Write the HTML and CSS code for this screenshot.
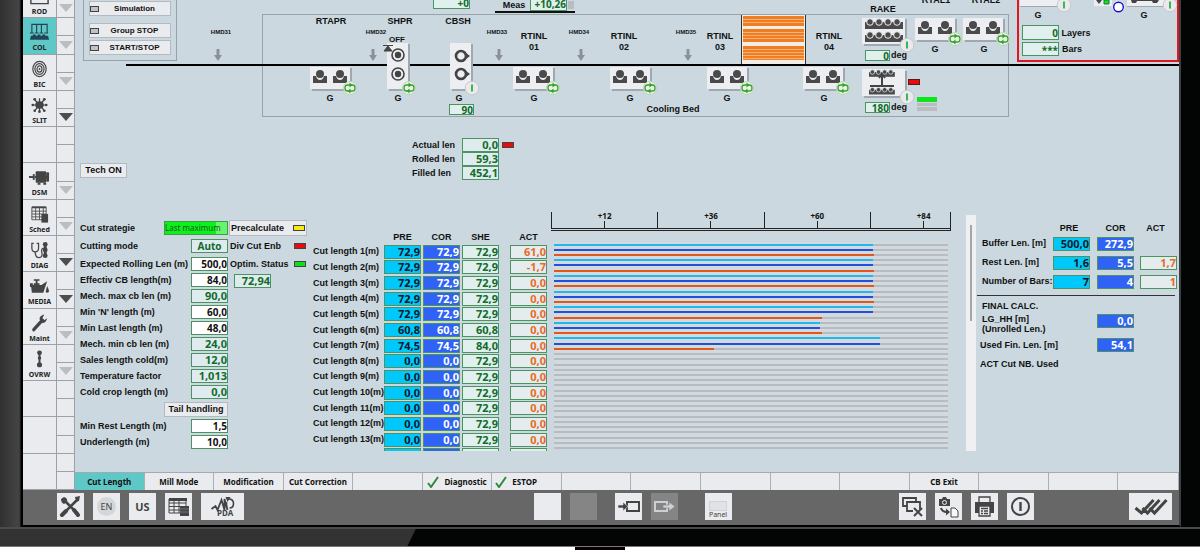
FILE: index.html
```html
<!DOCTYPE html>
<html lang="en">
<head>
<meta charset="utf-8">
<title>Cooling bed - Cut Length</title>
<link rel="stylesheet" href="styles.css">
</head>
<body>
<div class="monitor">
  <div class="screen">
    <nav class="areas">
      <a class="area" href="#"><svg class="area-icon" viewBox="0 0 22 18"><path d="M2 2h18v15H2z" fill="none" stroke="#444" stroke-width="1.5"/></svg>ROD</a><span class="more light"></span>
      <a class="area active" href="#"><svg class="area-icon" viewBox="0 0 22 18"><path d="M3 10V1h16v9M8 1v9M13 1v9M1 10h4M6 10h4M11 10h4M16 10h4" fill="none" stroke="#245" stroke-width="1.2"/><path d="M2 13h18l1 4H1z" fill="#245"/><path d="M4 12.5h3M9 12.5h3M14 12.5h3" stroke="#245" stroke-width="2"/></svg>COL</a><span class="more light"></span>
      <a class="area" href="#"><svg class="area-icon" viewBox="0 0 22 18"><g fill="none" stroke="#444" stroke-width="1.2"><ellipse cx="11" cy="9" rx="7" ry="8"/><ellipse cx="11" cy="9" rx="4.8" ry="5.6"/><ellipse cx="11" cy="9" rx="2.6" ry="3.2"/></g><circle cx="11" cy="9" r="1" fill="#444"/></svg>BIC</a><span class="more light"></span>
      <a class="area" href="#"><svg class="area-icon" viewBox="0 0 22 18"><ellipse cx="11" cy="9" rx="4.5" ry="3.8" fill="#444"/><path d="M11 9V2M11 9L5 2.500M11 9l6-6.500M3 9h16M11 9l-5 6M11 9l5 6M11 9v7" stroke="#444" stroke-width="1.300"/><g fill="#444"><circle cx="6" cy="3" r="1.400"/><circle cx="16" cy="3" r="1.400"/><circle cx="4" cy="9" r="1.400"/><circle cx="18" cy="9" r="1.400"/><circle cx="6" cy="15" r="1.400"/><circle cx="16" cy="15" r="1.400"/><circle cx="11" cy="16" r="1.400"/></g></svg>SLIT</a><span class="more dark"></span>
      <span class="area"></span><span class="more"></span>
      <a class="area" href="#"><svg class="area-icon" viewBox="0 0 22 18"><path d="M0 9h5" stroke="#444" stroke-width="2"/><rect x="4" y="6" width="2" height="6" fill="#444"/><rect x="7" y="3" width="11" height="12" rx="1" fill="#444"/><rect x="18" y="4" width="3" height="10" rx="1" fill="#444"/><path d="M6 9h13M9 16h3M15 16h3" stroke="#444" stroke-width="2"/></svg>DSM</a><span class="more light"></span>
      <a class="area" href="#"><svg class="area-icon" viewBox="0 0 22 18"><path d="M3 2h15v13H3zM3 6h15M3 9h15M3 12h15M7 2v13M11 2v13M15 2v13" fill="none" stroke="#555"/><path d="M3 2h15" stroke="#444" stroke-width="2"/><rect x="13" y="9" width="7" height="9" fill="#444"/></svg>Sched</a><span class="more light"></span>
      <a class="area" href="#"><svg class="area-icon" viewBox="0 0 22 18"><path d="M5 2H3v5q0 4 3.500 4T10 7V2H8M6.500 11q0 6 4 6t3-5 2-5" fill="none" stroke="#444" stroke-width="1.300"/><path d="M17 2v14" stroke="#444" stroke-width="3"/><g fill="#444"><circle cx="17" cy="3" r="2.500"/><circle cx="17" cy="9" r="2.500"/><circle cx="17" cy="15" r="2.500"/></g></svg>DIAG</a><span class="more dark"></span>
      <a class="area" href="#"><svg class="area-icon" viewBox="0 0 22 18"><path d="M2 8h11l6-4-4 12H3zM1 6h3v4H1zM5 6h6v2H5zM7 3h2v4H7zM5 2h6v1.500H5z" fill="#444"/><path d="M19 9q2 4 2 5.500t-2 1.500-1.500-1.500T19 9z" fill="#444"/></svg>MEDIA</a><span class="more dark"></span>
      <a class="area" href="#"><svg class="area-icon" viewBox="0 0 22 18"><path d="M5 16L14 6" stroke="#444" stroke-width="3.400" stroke-linecap="round"/><path d="M16 0q-5 1-5 5l3 4q4 0 5-5l-3 2-2-2z" fill="#444"/></svg>Maint</a><span class="more light"></span>
      <a class="area" href="#"><svg class="area-icon" viewBox="0 0 22 18"><path d="M11 3v12" stroke="#444" stroke-width="2"/><g fill="#444"><circle cx="11" cy="2.500" r="2.500"/><circle cx="11" cy="8" r="1.800"/><circle cx="11" cy="15" r="2.700"/></g></svg>OVRW</a><span class="more light"></span>
      <span class="area"></span><span class="more"></span>
      <span class="area"></span><span class="more"></span>
      <span class="area"></span><span class="more"></span>
    </nav>

    <main class="work">
      <section class="mimic">
        <svg class="mimic-art" viewBox="75 0 1104 210" preserveAspectRatio="xMinYMin meet">
          <defs>
            <g id="roll"><path d="M0 2h3q1 4 4 4t4-4h3v7H0z" fill="#4a4a4a"/><circle cx="7" cy="0" r="4" fill="#4a4a4a"/></g>
            <g id="loop"><circle r="6.500" fill="#e4f5dc" stroke="#b9d8b4"/><path d="M-1 3h-1.500q-2.500 0-2.500-3t2.500-3h3M1-3h1.500q2.500 0 2.500 3T2.500 3H0" fill="none" stroke="#3c9a3c" stroke-width="1.300"/><path d="M-.5-5.500l3 2.500-3 2.500zM.5 5.500l-3-2.500 3-2.500z" fill="#3c9a3c"/></g>
            <g id="run"><circle r="6.800" fill="#ebe9eb" stroke="#c3c9cd"/><path d="M0-3.500v7" stroke="#22b14c" stroke-width="1.800"/></g>
            <g id="pair"><path d="M2 23h39V1" fill="none" stroke="#9fa8af" stroke-width="2"/><rect width="40" height="22" fill="#eceef1"/><use href="#roll" x="3" y="7"/><use href="#roll" x="23" y="7"/><use href="#loop" x="40" y="21"/></g>
            <g id="stand"><path d="M2 47h20V1" fill="none" stroke="#9fa8af" stroke-width="2"/><rect width="21" height="46" fill="#eceef1"/></g>
            <g id="target"><circle r="6" fill="none" stroke="#444" stroke-width="1.600"/><circle r="3.200" fill="#444"/></g>
            <g id="ring"><circle r="5" fill="none" stroke="#444" stroke-width="2.600"/><path d="M5-3l4 3-4 3z" fill="#444"/></g>
            <path id="down" d="M-1.500 0h3v6H4l-4 6-4-6h2.500z" fill="#8b9197"/>
            <g id="bed"><path d="M0 3h38v7H0z" fill="#4a4a4a"/><g fill="#4a4a4a" stroke="#eceef1"><circle cx="5" cy="3" r="3.300"/><circle cx="14" cy="3" r="3.300"/><circle cx="23" cy="3" r="3.300"/><circle cx="32" cy="3" r="3.300"/></g></g>
          </defs>

          <rect x="262.500" y="14.500" width="746" height="102" class="outline"/>
          <rect x="742" y="15" width="63" height="49" fill="#f3ede6"/>
          <path d="M741.500 15v49M805.500 15v49" stroke="#333"/>
          <path d="M743 16h61v10h-61zM743 29h61v13h-61zM743 46h61v14h-61z" fill="#f07d22"/>
          <path d="M743 19.500h61M743 22.500h61M743 32.500h61M743 35.500h61M743 38.500h61M743 49.500h61M743 52.500h61M743 55.500h61M743 58.500h61" stroke="#f7b27c"/>
          <path d="M126 65h1053" stroke="#000" stroke-width="2"/>

          <use href="#pair" x="310" y="67"/><use href="#pair" x="513" y="67"/><use href="#pair" x="610" y="67"/><use href="#pair" x="707" y="67"/><use href="#pair" x="803" y="67"/>
          <use href="#pair" x="915" y="18"/><use href="#pair" x="963" y="18"/>
          <use href="#stand" x="387" y="43"/><use href="#target" x="398" y="55"/><use href="#target" x="398" y="74"/><use href="#loop" x="409" y="88"/>
          <path d="M383 45.500h10M384 51l4-5 4 5z" fill="#444" stroke="#444"/>
          <use href="#stand" x="450" y="43"/><use href="#ring" x="461" y="56"/><use href="#ring" x="461" y="74"/><use href="#run" x="472" y="88"/>
          <use href="#down" x="218" y="49"/><use href="#down" x="373" y="49"/><use href="#down" x="499" y="49"/><use href="#down" x="581" y="49"/><use href="#down" x="688" y="49"/>

          <path d="M864 45h42V19M864 97h42V71" fill="none" stroke="#9fa8af" stroke-width="2"/>
          <rect x="862" y="18" width="43" height="26" fill="#eceef1"/><use href="#bed" x="865" y="19"/><use href="#bed" x="865" y="32"/><use href="#run" x="907" y="45"/>
          <rect x="862" y="69" width="43" height="27" fill="#eceef1"/>
          <g transform="translate(869 70) scale(.68)"><use href="#bed"/><use href="#bed" y="26"/></g>
          <path d="M870 86h24M882 85v-9M879 78l3-4 3 4" fill="none" stroke="#444" stroke-width="2"/><use href="#run" x="907" y="97"/>
          <rect x="908.500" y="79.500" width="11" height="5" fill="#e80c0c" stroke="#5b1a1a"/>
          <path d="M917 97h20v5h-20z" fill="#0ee31c"/><path d="M917 103h20v3h-20zM917 107h20v4h-20z" fill="#bcbcc0"/>

          <path d="M1018 -2V61H1178V-2" fill="none" stroke="#dd1822" stroke-width="2"/>
          <path d="M1020 0h43v6h-43zM1094 0h18v6h-18zM1127 0h40v6h-40z" fill="#eceef1"/>
          <path d="M1020 6.500h40M1127 6.500h40" stroke="#9fa8af"/>
          <path d="M1096 0h6l-3 4zM1131 0h28l-2 3h-4l-1-2h-15l-1 2h-4z" fill="#444"/><path d="M1104 0h5v4h-5z" fill="#0ee31c" stroke="#274"/>
          <use href="#run" x="1064" y="5"/><use href="#run" x="1170" y="5"/><circle cx="1118.500" cy="7" r="6.500" fill="#dfe5ea"/><circle cx="1118.500" cy="7" r="4.800" fill="#fff" stroke="#1414c8" stroke-width="1.400"/>

          <path d="M495 12h80" stroke="#111" stroke-width="2"/><path d="M568 1h6v8h-6z" fill="#b9bdc3"/>
          <g class="readout">
            <rect x="433.500" y="-5.500" width="36" height="14"/><rect x="530.500" y="-3.500" width="36" height="14"/>
            <rect x="449.500" y="104.500" width="24" height="10"/><rect x="865.500" y="50.500" width="24" height="10"/><rect x="865.500" y="102.500" width="24" height="10"/>
            <rect x="1022.500" y="25.500" width="36" height="14"/><rect x="1022.500" y="42.500" width="36" height="13"/>
          </g>
          <g class="readout-text"><text x="469" y="7">+0</text><text x="566" y="8">+10,26</text><text x="473" y="114">90</text><text x="889" y="60">0</text><text x="889" y="112">180</text><text x="1058" y="37">0</text><text x="1058" y="54">***</text></g>
          <g class="caption"><text x="331" y="24">RTAPR</text><text x="400" y="24">SHPR</text><text x="458" y="24">CBSH</text>
            <text x="534" y="39">RTINL</text><text x="534" y="50">01</text><text x="624" y="39">RTINL</text><text x="624" y="50">02</text><text x="720" y="39">RTINL</text><text x="720" y="50">03</text><text x="829" y="39">RTINL</text><text x="829" y="50">04</text>
            <text x="883" y="12">RAKE</text><text x="936" y="3">RTAL1</text><text x="986" y="3">RTAL2</text>
            <text x="330" y="101">G</text><text x="398" y="101">G</text><text x="459" y="101">G</text><text x="534" y="101">G</text><text x="630" y="101">G</text><text x="727" y="101">G</text><text x="824" y="101">G</text><text x="935" y="52">G</text><text x="984" y="52">G</text><text x="1038" y="18">G</text><text x="1144" y="18">G</text>
            <text x="673" y="112">Cooling Bed</text><text x="899" y="58">deg</text><text x="899" y="110">deg</text><text x="514" y="8">Meas</text><text x="1076" y="36">Layers</text><text x="1072" y="52">Bars</text></g>
          <g class="caption small"><text x="397" y="42">OFF</text></g>
          <g class="caption tiny"><text x="221" y="34">HMD31</text><text x="376" y="34">HMD32</text><text x="497" y="34">HMD33</text><text x="579" y="34">HMD34</text><text x="686" y="34">HMD35</text></g>
        </svg>
        <div class="group-stop">
          <button><i class="led off"></i>Simulation</button>
          <button class="spaced"><i class="led off"></i>Group STOP</button>
          <button><i class="led off"></i>START/STOP</button>
        </div>
        <button class="tech">Tech ON</button>
        <div class="lens">
          <label for="al">Actual len</label><output class="box" id="al">0,0</output><i class="led red"></i>
          <label for="rl">Rolled len</label><output class="box" id="rl">59,3</output><i></i>
          <label for="fl">Filled len</label><output class="box" id="fl">452,1</output><i></i>
        </div>
      </section>

      <section class="details">
        <form class="settings">
          <div class="row tall"><label for="st">Cut strategie</label><output class="strategy" id="st">Last maximum</output></div>
          <div class="row tall last-mode"><label for="cm">Cutting mode</label><output class="box mode" id="cm">Auto</output></div>
          <div class="row"><label for="s1">Expected Rolling Len (m)</label><input class="box" id="s1" value="500,0"></div>
          <div class="row"><label for="s2">Effectiv CB length(m)</label><input class="box" id="s2" value="84,0"></div>
          <div class="row"><label for="s3">Mech. max cb len (m)</label><output class="box" id="s3">90,0</output></div>
          <div class="row"><label for="s4">Min 'N' length (m)</label><input class="box" id="s4" value="60,0"></div>
          <div class="row"><label for="s5">Min Last length (m)</label><input class="box" id="s5" value="48,0"></div>
          <div class="row"><label for="s6">Mech. min cb len (m)</label><output class="box" id="s6">24,0</output></div>
          <div class="row"><label for="s7">Sales length cold(m)</label><output class="box" id="s7">12,0</output></div>
          <div class="row"><label for="s8">Temperature factor</label><output class="box" id="s8">1,013</output></div>
          <div class="row"><label for="s9">Cold crop length (m)</label><output class="box" id="s9">0,0</output></div>
          <div class="row tall"><button type="button" class="tail">Tail handling</button></div>
          <div class="row"><label for="s10">Min Rest Length (m)</label><input class="box" id="s10" value="1,5"></div>
          <div class="row"><label for="s11">Underlength (m)</label><input class="box" id="s11" value="10,0"></div>
        </form>
        <div class="status">
          <button class="line">Precalculate<i class="led yellow"></i></button>
          <div class="line">Div Cut Enb<i class="led red"></i></div>
          <div class="line">Optim. Status<i class="led green"></i></div>
          <output class="box">72,94</output>
        </div>
        <div class="cuts">
          <table>
            <thead><tr><th></th><th>PRE</th><th>COR</th><th>SHE</th><th class="apart">ACT</th></tr></thead>
            <tbody id="cut-rows"></tbody>
          </table>
        </div>
        <div class="chart">
          <div class="scale">
            <div class="span"><span class="mark">+12</span></div>
            <div class="span"><span class="mark">+36</span></div>
            <div class="span"><span class="mark">+60</span></div>
            <div class="span last"><span class="mark">+84</span></div>
          </div>
          <div class="bars"><div class="bars-all" id="bars"></div></div>
        </div>
        <div class="scroll"><div class="thumb"></div></div>
        <div class="summary">
          <table class="totals">
            <thead><tr><th></th><th>PRE</th><th>COR</th><th>ACT</th></tr></thead>
            <tbody>
              <tr><td>Buffer Len. [m]</td><td><output class="box pre">500,0</output></td><td><output class="box cor">272,9</output></td><td></td></tr>
              <tr><td>Rest Len. [m]</td><td><output class="box pre">1,6</output></td><td><output class="box cor">5,5</output></td><td><output class="box act">1,7</output></td></tr>
              <tr><td>Number of Bars:</td><td><output class="box pre">7</output></td><td><output class="box cor">4</output></td><td><output class="box act">1</output></td></tr>
            </tbody>
          </table>
          <div class="final">
            <h2>FINAL CALC.</h2>
            <div class="final-row first"><label class="inset" for="lg">LG_HH [m]<br>(Unrolled Len.)</label><output class="box cor" id="lg">0,0</output></div>
            <div class="final-row"><label for="uf">Used Fin. Len. [m]</label><output class="box cor" id="uf">54,1</output></div>
            <p>ACT Cut NB. Used</p>
          </div>
        </div>
      </section>

      <div class="tabs">
        <button class="active">Cut Length</button><button>Mill Mode</button><button>Modification</button><button>Cut Correction</button><span></span>
        <button><svg viewBox="0 0 12 12"><path d="M1 7l3 4 7-10" fill="none" stroke="#2f8a3a" stroke-width="2"/></svg>Diagnostic</button>
        <button class="start"><svg viewBox="0 0 12 12"><path d="M1 7l3 4 7-10" fill="none" stroke="#2f8a3a" stroke-width="2"/></svg>ESTOP</button>
        <span></span><span></span><span></span><span></span><span></span><button>CB Exit</button><span></span><span></span><span></span>
      </div>
    </main>

    <footer class="toolbar">
      <div class="tools">
        <button aria-label="Settings"><svg viewBox="0 0 27 27"><path d="M7 20L19 8M8 8l12 12" stroke="#444" stroke-width="2.600" stroke-linecap="round"/><path d="M4 6l3-2q4 1 3 5l-3 2q-3-1-3-5l3 2zM18 4l5-1-1 5-3 1z" fill="#444"/><path d="M17 17l4 5M5 22l4-4" stroke="#444" stroke-width="4" stroke-linecap="round"/></svg></button>
        <button class="lang"><span>EN</span></button>
        <button class="big">US</button>
        <button aria-label="Table"><svg viewBox="0 0 27 27"><path d="M4 6h17v14H4zM4 10h17M4 13.500h17M4 17h17M9 6v14M14 6v14" fill="none" stroke="#444"/><path d="M4 6.500h18" stroke="#444" stroke-width="3"/><rect x="15" y="13" width="9" height="10" fill="#444"/><path d="M15 16h9M15 19h9" stroke="#888" stroke-width=".7"/></svg></button>
        <button class="wide pda"><svg viewBox="0 0 42 27"><path d="M10 16l4-3 2 4 4-10 3 10V6l3 11" fill="none" stroke="#444" stroke-width="1.800"/><path d="M25 15V9M28 15q4 0 4-4.500T27 6" fill="none" stroke="#444" stroke-width="1.600"/><path d="M24 4h5l-3 5z" fill="#444"/></svg><span>PDA</span></button>
      </div>
      <div class="tools">
        <button aria-label="Blank"></button>
        <button class="dim" aria-label="Blank" disabled></button>
        <button class="apart" aria-label="Enter"><svg viewBox="0 0 27 27"><rect x="12" y="9" width="12" height="9" fill="none" stroke="#444" stroke-width="2"/><path d="M3 12h5V9l5 4.500L8 18v-3H3z" fill="#444" stroke="#e9ebee" stroke-width=".6"/></svg></button>
        <button class="dim" aria-label="Leave" disabled><svg viewBox="0 0 27 27"><rect x="4" y="9" width="12" height="9" fill="none" stroke="#cdd0d2" stroke-width="2"/><path d="M12 12h6V9l6 4.500-6 4.500v-3h-6z" fill="#cdd0d2" stroke="#858585" stroke-width=".6"/></svg></button>
        <button class="panel-btn"><i></i>Panel</button>
      </div>
      <div class="tools">
        <button aria-label="Close windows"><svg viewBox="0 0 27 27"><path d="M8 13H4V5h13v3M9 18H8V9h13v7M8 18h6" fill="none" stroke="#444" stroke-width="1.800"/><path d="M15 15l8 8M23 15l-8 8" stroke="#444" stroke-width="2"/></svg></button>
        <button aria-label="Snapshot"><svg viewBox="0 0 27 27"><path d="M4 6h3l1-2h3l1 2h3v7H4z" fill="#444"/><circle cx="9.500" cy="9.500" r="2" fill="none" stroke="#e9ebee"/><path d="M6 15q1 4 6 4" fill="none" stroke="#444" stroke-width="2"/><path d="M11 15.500l4 3.500-4 3.500z" fill="#444"/><path d="M16 15h4l3 3v6h-7z" fill="#f7f7f7" stroke="#444"/></svg></button>
        <button aria-label="Print"><svg viewBox="0 0 27 27"><path d="M8 9V4h11v5" fill="none" stroke="#444" stroke-width="1.300"/><path d="M4 9h19v11H4z" fill="#444"/><path d="M8 13h11v10H8z" fill="#e9ebee" stroke="#444" stroke-width="1.300"/><path d="M10 15.500h7M10 18h2M13 18h4M10 20.500h2M13 20.500h4" stroke="#444" stroke-width="1.300"/></svg></button>
        <button aria-label="Power"><svg viewBox="0 0 27 27"><circle cx="13.500" cy="13.500" r="8.500" fill="none" stroke="#444" stroke-width="2"/><path d="M13.500 9v9" stroke="#444" stroke-width="2.400"/></svg></button>
      </div>
      <div class="tools">
        <button class="wide" aria-label="Acknowledge all"><svg viewBox="0 0 42 27"><path d="M6 15l6 5L24 7M13 15l5 5L30 7M20 15l5 5L37 7" fill="none" stroke="#444" stroke-width="3"/></svg></button>
      </div>
    </footer>
  </div>
  <div class="chin"><div class="chin-left"></div></div>
</div>
<div class="stand"></div>
<script src="app.js"></script>
</body>
</html>
```
FILE: app.js
```js
// pre, cor, she, act, then the bar lengths in percent of the scale
const cuts = [
  ["72,9", "72,9", "72,9", "61,0", 81, 81, 81.3],
  ["72,9", "72,9", "72,9", "-1,7", 81, 81, 81.3],
  ["72,9", "72,9", "72,9", "0,0", 81, 81, 81.3],
  ["72,9", "72,9", "72,9", "0,0", 81, 81, 81.3],
  ["72,9", "72,9", "72,9", "0,0", 81, 81, 68],
  ["60,8", "60,8", "60,8", "0,0", 67.5, 67.5, 68],
  ["74,5", "74,5", "84,0", "0,0", 82.8, 82.8, 40.6]
];
while (cuts.length < 14) cuts.push(["0,0", "0,0", "72,9", "0,0", 0, 0, 0]);

document.getElementById("cut-rows").innerHTML = cuts.map((c, i) =>
  `<tr><td>${i < 13 ? `Cut length ${i + 1}(m)` : ""}</td>` +
  ["pre", "cor", "she", "act"].map((k, j) =>
    `<td class="${k === "act" ? "apart" : ""}"><output class="box ${k}">${i < 13 ? c[j] : ""}</output></td>`).join("") +
  "</tr>").join("");

document.getElementById("bars").innerHTML = cuts.map(c =>
  `<div class="bar-row">` + ["pre", "cor", "act"].map((k, j) =>
    `<div class="track"><div class="fill ${k}" style="width:${c[4 + j]}%"></div></div>`).join("") +
  "</div>").join("");
```
FILE: styles.css
```css
* { box-sizing: border-box; }
html, body { height: 100%; margin: 0; }
body {
  display: flex; flex-direction: column; overflow: hidden; background: #fff;
  font: bold 9px/11px "Liberation Sans", Arial, sans-serif; color: #111;
}
button, input, output { font: inherit; color: inherit; margin: 0; }
button { border: 1px solid #b3bac0; background: #e9ebee; padding: 0; }
i { font-style: normal; }

.monitor {
  flex: 1; min-height: 0; display: flex; flex-direction: column;
  background: linear-gradient(90deg, #303030, #444 18px, #3a3a3a 20px, #000 21px, #000 50%, #030504 50%);
  border-bottom: 1px solid #777;
}
.screen {
  flex: 1; min-height: 0; margin: 0 19px 0 21px;
  border: solid #000; border-width: 0 2px 2px; border-right-color: #3a3f43;
  display: grid; grid-template-columns: 52px 1fr; grid-template-rows: 1fr 35px;
  background: #cbd8e0;
}
.chin { height: 19px; border-top: 2px solid #4a4c4c; background: #030504; }
.chin-left { width: 35%; height: 100%; background: #333; clip-path: polygon(0 0, 99% 0, 97% 100%, 0 100%); }
.stand { width: 50px; height: 3px; margin: 0 auto; background: #0a0000; }

/* area navigation */
.areas {
  margin-top: -18px; display: grid; grid-template-columns: 34px 18px;
  grid-auto-rows: 1fr; background: #e9ebee; min-height: 0;
}
.area {
  display: flex; flex-direction: column; align-items: center; padding-top: 5px; min-height: 0;
  border: solid #9aa2a8; border-width: 0 1px 1px 0;
  font: bold 7px/10px "Noto Sans", sans-serif; color: #222; text-decoration: none;
}
.area.active { background: #5ec8c6; }
.area-icon { width: 21px; height: 18px; flex: none; margin-bottom: 2px; }
.more {
  display: flex; align-items: flex-end; justify-content: center; padding-bottom: 5px;
  border: solid #9aa2a8; border-width: 0 1px 1px 0;
  background: linear-gradient(#9aa2a8, #9aa2a8) 0 50% / 100% 1px no-repeat;
}
.more.light::after, .more.dark::after { content: ""; border: 7px solid transparent; border-bottom: 0; border-top: 8px solid #bbbec1; }
.more.dark::after { border-top-color: #4d4d4d; }

.work { display: flex; flex-direction: column; min-width: 0; min-height: 0; }

/* process mimic */
.mimic { position: relative; height: 210px; flex: none; }
.mimic-art { display: block; width: 100%; height: 100%; }
.mimic-art text { font: bold 9px "Liberation Sans", Arial, sans-serif; fill: #111; }
.mimic-art .caption text { text-anchor: middle; }
.mimic-art .small text { font-size: 8px; }
.mimic-art .tiny text { font-size: 6px; }
.mimic-art .readout-text text { font: bold 10px "Noto Sans", sans-serif; fill: #126b2b; text-anchor: end; }
.outline { fill: none; stroke: #98a2a9; }
.readout { fill: #dff0ee; stroke: #4c9360; }
.group-stop {
  position: absolute; left: 8px; top: 0; width: 94px; padding: 1px 5px 5px; border: 1px solid #98a2a9; border-top: 0;
  display: flex; flex-direction: column; gap: 2px;
}
.group-stop button { display: grid; grid-template-columns: 9px 1fr; align-items: center; height: 15px; font-size: 8px; }
.group-stop .spaced { margin-top: 5px; }
.tech { position: absolute; left: 5px; top: 163px; width: 47px; height: 15px; }
.lens {
  position: absolute; left: 337px; top: 138px; display: grid; grid-template-columns: 47px 37px 13px;
  column-gap: 3px; align-items: center;
}
.led { width: 12px; height: 6px; border: 1px solid #444; flex: none; }
.led.off { width: 9px; background: #bfc3c7; }
.led.red { background: #e80c0c; }
.led.yellow { background: #f4ec10; }
.led.green { background: #0fe01c; }

/* value boxes */
.box {
  display: block; width: 37px; height: 14px; padding: 0; border: 1px solid #4c9360; background: #dfecef;
  font: bold 11px/12px "Noto Sans", sans-serif; text-align: right; color: #126b2b;
}
input.box { background: #fff; color: #111; font-size: 10px; }
.box.mode { text-align: center; font-size: 10px; }
.box.pre { background: #00c8fb; color: #0b1a2b; }
.box.cor { background: #2f62f5; color: #fff; }
.box.she { background: #e0f0ee; }
.box.act { color: #e8692a; background: #e4ecee; }

/* lower part */
.details { flex: 1; min-height: 0; display: flex; align-items: flex-start; padding-left: 5px; }
.settings { width: 148px; padding-top: 9px; }
.row { display: flex; align-items: center; justify-content: space-between; height: 16px; white-space: nowrap; }
.row.tall { height: 18px; }
.row.last-mode { margin-bottom: 1px; }
.strategy {
  width: 64px; height: 14px; border: 1px solid #3f9a4a; background: linear-gradient(90deg, #0cf01c 82%, #66f56c 82%);
  font: 8px/12px "Noto Sans", sans-serif; color: #155c1c;
}
.tail { width: 64px; height: 15px; margin-left: auto; }
.status { width: 78px; margin-left: 1px; padding-top: 10px; }
.status .line {
  display: flex; align-items: center; justify-content: space-between; width: 100%; height: 16px; margin-bottom: 2px;
  padding: 0 1px; white-space: nowrap;
}
.status .box { margin-left: 5px; }

.cuts { margin: 20px 0 0 6px; height: 221px; overflow: hidden; }
table { border-collapse: collapse; }
th, td { padding: 0; text-align: left; white-space: nowrap; font-weight: bold; }
th { text-align: center; }
.cuts table { height: 233px; }
.cuts thead tr { height: 14px; }
.cuts th:first-child { width: 71px; }
.cuts td + td, .cuts th + th { padding-right: 2px; }
.cuts .apart { padding-left: 9px; }

.chart { flex: 1; min-width: 0; margin-left: 2px; padding-top: 2px; }
.scale { display: flex; height: 19px; border: solid #222; border-width: 0 1px 3px 0; border-bottom-style: double; }
.span { flex: 4; display: grid; grid-template-columns: 1fr; border-left: 1px solid #222; }
.span.last { flex: 3; grid-template-columns: 1fr 2fr; }
.span.last .mark { grid-column: 2; }
.mark {
  text-align: center; font: bold 8px/8px "Noto Sans", sans-serif;
  background: linear-gradient(#222, #222) 50% 100% / 1px 7px no-repeat;
}
.bars { height: 207px; margin: 11px 3px 0; overflow: hidden; }
.bars-all { height: 219px; display: grid; grid-auto-rows: 1fr; background: #d2d9df; }
.bar-row { display: flex; flex-direction: column; justify-content: space-around; min-height: 0; }
.track { height: 2px; background: #b7bcc1; }
.fill { height: 100%; }
.fill.pre { background: #22b9ea; }
.fill.cor { background: #2350d8; }
.fill.act { background: #e0591c; }

.scroll { width: 10px; height: 236px; margin: 5px 0 0 15px; padding-top: 10px; background: #eef0f1; }
.thumb { width: 2px; height: 96px; margin: 0 auto; background: #a3a6a8; }

.summary { width: 200px; margin: 13px 2px 0 1px; }
.totals { width: 100%; table-layout: fixed; }
.totals th:first-child { width: 76px; }
.totals td:first-child { padding-left: 5px; }
.totals th { height: 11px; padding-right: 12px; }
.totals th:nth-child(2) { width: 44px; }
.totals th:nth-child(3) { width: 43px; padding-right: 6px; }
.totals th:nth-child(4) { padding-right: 6px; }
.totals tbody tr { height: 19px; }
.final { margin: 4px 2px 0 0; border-top: 1px solid #333; padding: 5px 0 0 3px; line-height: 10px; }
.final h2 { font-size: inherit; margin: 0 0 3px 2px; }
.final-row { display: flex; justify-content: space-between; align-items: center; height: 16px; padding-right: 41px; }
.final-row.first { height: 23px; align-items: flex-start; }
.final .inset { padding-left: 2px; }
.final p { margin: 6px 0 0; }

.tabs { display: grid; grid-template-columns: repeat(15, 70fr) 61fr; height: 18px; flex: none; border-top: 1px solid #a3abb2; }
.tabs > * {
  display: flex; align-items: center; justify-content: center; gap: 5px; background: #e9ebee;
  border: 0; border-right: 1px solid #a9b0b6; font: bold 8px/10px "Noto Sans", sans-serif; white-space: nowrap; min-width: 0;
}
.tabs .active { background: #5ec8c6; }
.tabs .start { justify-content: flex-start; padding-left: 3px; }
.tabs svg { width: 12px; height: 12px; }

/* toolbar */
.toolbar {
  grid-column: 1 / -1; display: grid; grid-template-columns: auto 288fr auto 167fr auto 94fr auto;
  padding: 3px 7px 0 34px; background: #676767;
}
.tools { display: flex; gap: 9px; }
.tools:nth-child(2) { grid-column: 3; }
.tools:nth-child(3) { grid-column: 5; }
.tools:nth-child(4) { grid-column: 7; }
.tools button { width: 27px; height: 27px; border: 0; display: grid; place-items: center; position: relative; color: #444; }
.tools button.wide { width: 43px; }
.tools button.dim { background: #858585; }
.tools button.apart { margin-left: 9px; }
.tools svg { width: 100%; height: 27px; display: block; }
.lang span { width: 19px; height: 19px; border-radius: 50%; background: #d4d6d8; font: 9px/19px "Noto Sans", sans-serif; }
.tools .big { font: bold 11px/27px "Noto Sans", sans-serif; }
.pda span { position: absolute; left: 16px; bottom: 3px; font: bold 8px/8px "Noto Sans", sans-serif; }
.tools .panel-btn { margin-left: 18px; font: 7px/8px "Noto Sans", sans-serif; align-content: end; padding-bottom: 1px; }
.panel-btn i { width: 18px; height: 10px; border: 1px solid #d0d3d5; background: #e0e2e5; }
```
